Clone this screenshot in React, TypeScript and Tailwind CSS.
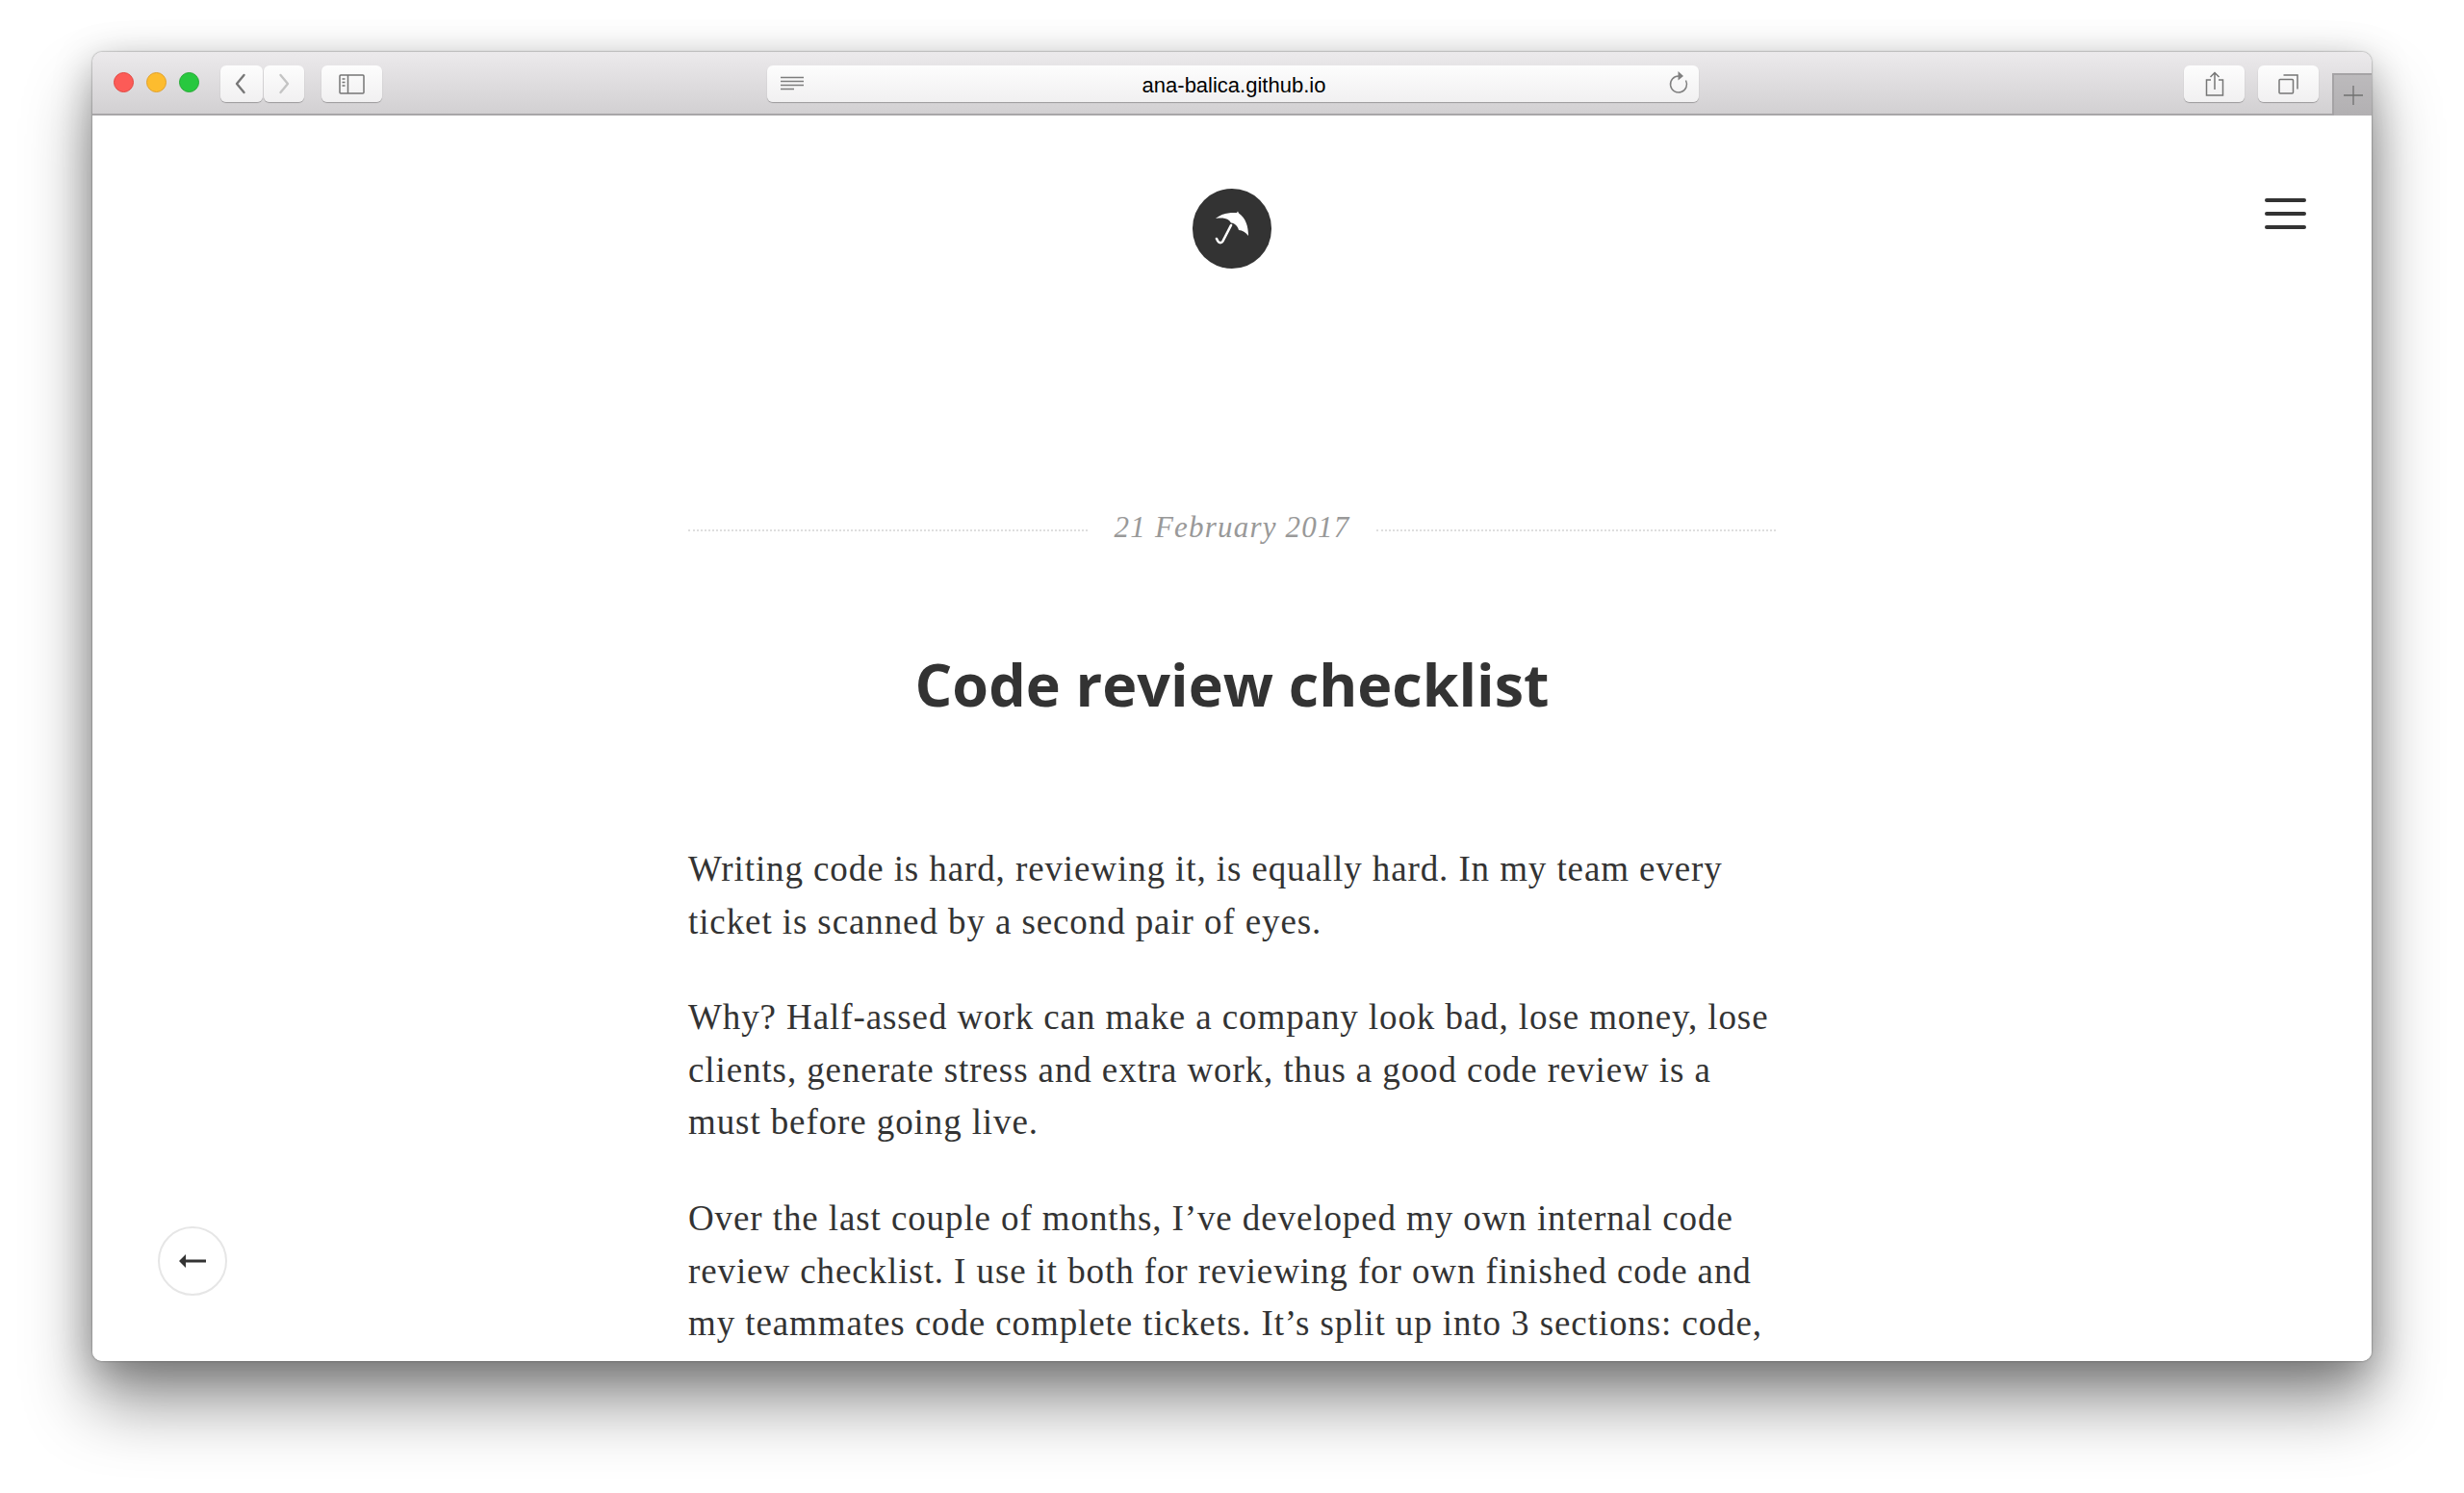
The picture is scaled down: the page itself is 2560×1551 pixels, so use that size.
import React from 'react';

const BODY_FONT = "font-['Liberation_Serif','DejaVu_Serif',serif]";

const ToolbarButton: React.FC<{ className?: string; children: React.ReactNode }> = ({ className, children }) => (
  <div
    className={`flex h-[38px] items-center justify-center rounded-[6px] bg-gradient-to-b from-[#fdfdfd] to-[#f1f0f1] shadow-[0_1px_1px_rgba(0,0,0,0.28)] ${className ?? ''}`}
  >
    {children}
  </div>
);

const Chevron: React.FC<{ d: string; stroke: string; className?: string }> = ({ d, stroke, className }) => (
  <svg className={className} width="14" height="22" viewBox="0 0 14 22" fill="none" stroke={stroke} strokeWidth="2.4" strokeLinecap="round" strokeLinejoin="round" aria-hidden="true">
    <path d={d} />
  </svg>
);

const Toolbar: React.FC = () => (
  <header className="flex h-[66px] shrink-0 items-start border-b-2 border-[#a8a6a8] bg-gradient-to-b from-[#eceaec] to-[#d2d0d2] pl-[22px] pt-[14px]">
    <div className="mt-[6.5px] flex gap-[13px]">
      <span className="h-[21px] w-[21px] rounded-full border border-[#e2463f] bg-[#fc5b57]" />
      <span className="h-[21px] w-[21px] rounded-full border border-[#e1a029] bg-[#fdbc2e]" />
      <span className="h-[21px] w-[21px] rounded-full border border-[#25a934] bg-[#28c83f]" />
    </div>
    <ToolbarButton className="ml-[22px] w-[44px]">
      <Chevron className="-ml-[2px]" d="M10.5 2 3 11l7.5 9" stroke="#777" />
    </ToolbarButton>
    <ToolbarButton className="ml-[1px] w-[42px]">
      <Chevron d="M3.5 2 11 11l-7.5 9" stroke="#c4c4c4" />
    </ToolbarButton>
    <ToolbarButton className="ml-[18px] w-[63px]">
      <svg width="27" height="21" viewBox="0 0 27 21" fill="none" stroke="#757575" strokeWidth="1.5" aria-hidden="true">
        <rect x="1" y="1" width="25" height="19" rx="1" />
        <path d="M9.500 1v19" />
        <path d="M3.500 5h3M3.500 8.500h3M3.500 12h3" strokeWidth="1.6" />
      </svg>
    </ToolbarButton>
    <ToolbarButton className="relative ml-[400px] w-[968px]">
      <svg className="absolute left-[14px] top-[11px]" width="24" height="17" viewBox="0 0 24 17" fill="none" stroke="#7d7d7d" strokeWidth="1.4" aria-hidden="true">
        <path d="M0 1.500h24M0 5.500h24M0 9.500h24M0 13.500h14" />
      </svg>
      <span className="pl-[2px] pt-[3px] font-['Liberation_Sans',Arial,sans-serif] text-[22px] leading-none text-black">ana-balica.github.io</span>
      <svg className="absolute right-[10px] top-[4px]" width="22" height="26" viewBox="0 0 22 26" fill="none" stroke="#808080" strokeWidth="1.5" aria-hidden="true">
        <path d="M18.500 11.500A8.500 8.500 0 1 1 11 7" />
        <path d="M10.500 2 16 7l-5.500 4.500" fill="#808080" stroke="none" />
      </svg>
    </ToolbarButton>
    <ToolbarButton className="ml-[504px] w-[63px]">
      <svg width="20" height="27" viewBox="0 0 20 27" fill="none" stroke="#767676" strokeWidth="1.5" aria-hidden="true">
        <path d="M6 9H1.500v16h17V9H14" />
        <path d="M10 19V1.500M5.500 6 10 1.500 14.500 6" />
      </svg>
    </ToolbarButton>
    <ToolbarButton className="ml-[14px] w-[63px]">
      <svg width="21" height="21" viewBox="0 0 21 21" fill="none" stroke="#767676" strokeWidth="1.5" aria-hidden="true">
        <rect x="1" y="5.500" width="14.500" height="14.500" rx="1" />
        <path d="M5.500 1h14.500v14.500" />
      </svg>
    </ToolbarButton>
    <div className="ml-[14px] -mb-[2px] flex h-[44px] w-[41px] items-center justify-center self-end border-l-2 border-t-2 border-[#a5a3a5] bg-gradient-to-b from-[#bcbabc] to-[#b2b0b2]">
      <svg width="20" height="20" viewBox="0 0 20 20" stroke="#707070" strokeWidth="1.3" aria-hidden="true">
        <path d="M10 0v20M0 10h20" />
      </svg>
    </div>
  </header>
);

const Logo: React.FC = () => (
  <div className="flex h-[83px] w-[82px] items-center justify-center rounded-full bg-[#333]">
    <svg width="38" height="38" viewBox="0 0 38 38" fill="white" aria-hidden="true">
      <path d="M2 8C8 3 16 1.500 24 2l1-1.500 1 2C33 7 36 16 36 26c-3-4-6-5.500-10-6-1-4-4-7-8-7.500C16 9 12 7.500 8 7.500 6 7.500 4 7.500 2 8z" />
      <path d="M18 15 9.500 31.500c-1.200 2.200-4 2.200-5.200 0L3 29" fill="none" stroke="white" strokeWidth="2.600" strokeLinecap="round" />
    </svg>
  </div>
);

const Article: React.FC = () => (
  <article className="mx-auto flex w-[1130px] flex-col">
    <div className="mt-[252px] flex h-[40px] items-center">
      <span className="h-0 flex-1 border-t-2 border-dotted border-[#dedede]" />
      <time className={`mx-[28px] pb-[7px] ${BODY_FONT} text-[31px] italic leading-none tracking-[1.2px] text-[#999]`}>21 February 2017</time>
      <span className="h-0 flex-1 border-t-2 border-dotted border-[#dedede]" />
    </div>
    <h1 className="mt-[98px] text-center font-['Open_Sans',sans-serif] text-[61px] font-bold leading-[84px] text-[#333]">
      Code review checklist
    </h1>
    <div className={`mt-[123px] ${BODY_FONT} text-[37px] leading-[54.6px] tracking-[0.9px] text-[#333]`}>
      <p>
        Writing code is hard, reviewing it, is equally hard. In my team every
        <br />
        ticket is scanned by a second pair of eyes.
      </p>
      <p className="mt-[45px]">
        Why? Half-assed work can make a company look bad, lose money, lose
        <br />
        clients, generate stress and extra work, thus a good code review is a
        <br />
        must before going live.
      </p>
      <p className="mt-[45px]">
        Over the last couple of months, I’ve developed my own internal code
        <br />
        review checklist. I use it both for reviewing for own finished code and
        <br />
        my teammates code complete tickets. It’s split up into 3 sections: code,
      </p>
    </div>
  </article>
);

export default function App() {
  return (
    <div className="h-[1551px] w-[2560px] overflow-hidden bg-white pl-[96px] pt-[54px]">
      <div className="flex h-[1360px] w-[2368px] flex-col overflow-hidden rounded-[10px] shadow-[0_0_2px_rgba(0,0,0,0.55),0_44px_70px_rgba(0,0,0,0.42),0_10px_40px_rgba(0,0,0,0.26)]">
        <Toolbar />
        <main className="relative min-h-0 flex-1 overflow-hidden bg-white">
          <div className="flex justify-center pt-[76px]">
            <Logo />
          </div>
          <Article />
          <div className="absolute left-[2257px] top-[86px] flex w-[43px] flex-col gap-[10.5px]">
            <span className="h-[3.500px] rounded-full bg-[#333]" />
            <span className="h-[3.500px] rounded-full bg-[#333]" />
            <span className="h-[3.500px] rounded-full bg-[#333]" />
          </div>
          <div className="absolute left-[68px] top-[1154px] flex h-[72px] w-[72px] items-center justify-center rounded-full border-2 border-[#e6e6e6] bg-white">
            <svg width="28" height="16" viewBox="0 0 28 16" fill="#333" aria-hidden="true">
              <path d="M0 8 7 1v5.500h21v3H7V15z" />
            </svg>
          </div>
        </main>
      </div>
    </div>
  );
}
